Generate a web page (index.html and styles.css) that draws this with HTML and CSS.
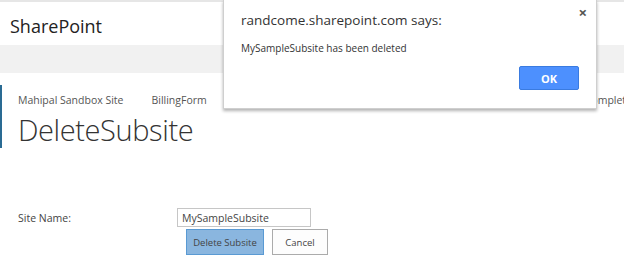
FILE: index.html
```html
<!DOCTYPE html>
<html>
<head>
    <title>DeleteSubsite</title>
    <link rel="stylesheet" href="styles.css">
</head>
<body>
    <div class="top-line"></div>
    <div class="suite-bar">SharePoint</div>
    <div class="ribbon"></div>

    <div class="page">
        <div class="accent"></div>
        <div class="content">
            <div class="breadcrumb">
                <span>Mahipal Sandbox Site</span>
                <span>BillingForm</span>
                <span class="crumb-right">Complete</span>
            </div>
            <h1>DeleteSubsite</h1>

            <div class="form-row">
                <label for="site-name">Site Name:</label>
                <div class="field">
                    <input type="text" id="site-name" value="MySampleSubsite">
                    <div class="buttons">
                        <button class="primary">Delete Subsite</button>
                        <button>Cancel</button>
                    </div>
                </div>
            </div>
        </div>
    </div>

    <!-- Browser alert -->
    <div class="alert">
        <div class="alert-close">&times;</div>
        <div class="alert-title">randcome.sharepoint.com says:</div>
        <div class="alert-msg">MySampleSubsite has been deleted</div>
        <div class="alert-actions">
            <button class="ok">OK</button>
        </div>
    </div>
</body>
</html>
```

FILE: styles.css
```css
body {
    margin: 0;
    font-family: "Segoe UI", "Open Sans", "Noto Sans", sans-serif;
    background-color: #fff;
    color: #444;
    width: 624px;
    height: 275px;
    overflow: hidden;
    position: relative;
}
.top-line {
    height: 2px;
    background-color: #e6e6e6;
}
.suite-bar {
    height: 43px;
    box-sizing: border-box;
    padding: 13px 0 0 10px;
    font-size: 18px;
    color: #222;
    line-height: 22px;
}
.ribbon {
    height: 28px;
    background-color: #f1f1f1;
}
/* Main page */
.page {
    display: flex;
    padding-top: 12px;
}
.accent {
    width: 2px;
    height: 63px;
    background-color: #2a6b93;
    flex-shrink: 0;
}
.content {
    padding-left: 16px;
    flex: 1;
    min-width: 0;
}
.breadcrumb {
    font-size: 10.5px;
    color: #555;
    line-height: 15px;
    display: flex;
    gap: 28px;
    margin-top: 8px;
    white-space: nowrap;
    overflow: hidden;
}
.crumb-right {
    margin-left: auto;
    margin-right: -8px;
}
h1 {
    margin: 4px 0 0 0;
    font-size: 29px;
    font-weight: 300;
    color: #333;
    line-height: 35px;
    letter-spacing: -0.4px;
}
.form-row {
    display: flex;
    margin-top: 61px;
}
.form-row label {
    width: 159px;
    font-size: 10.5px;
    color: #444;
    padding-top: 3px;
}
.field {
    display: flex;
    flex-direction: column;
}
.field input {
    width: 134px;
    height: 19px;
    box-sizing: border-box;
    border: 1px solid #c6c6c6;
    padding: 0 4px;
    font-family: inherit;
    font-size: 10.5px;
    color: #444;
}
.buttons {
    display: flex;
    gap: 8px;
    margin: 2px 0 0 9px;
}
.buttons button {
    height: 26px;
    width: 56px;
    box-sizing: border-box;
    border: 1px solid #ababab;
    background-color: #fdfdfd;
    font-family: inherit;
    font-size: 9.5px;
    color: #444;
    padding: 0;
    white-space: nowrap;
}
.buttons button.primary {
    width: 78px;
    background-color: #8ab6df;
    border-color: #5a9ad3;
}
/* Alert dialog */
.alert {
    position: absolute;
    left: 223px;
    top: 0;
    width: 374px;
    height: 109px;
    box-sizing: border-box;
    background-color: #fff;
    border: 1px solid #cfcfcf;
    border-top: none;
    box-shadow: 0 2px 3px rgba(0, 0, 0, 0.3);
    padding: 9px 17px 0 17px;
}
.alert-close {
    position: absolute;
    right: 9px;
    top: 2px;
    font-size: 15px;
    font-weight: bold;
    color: #555;
}
.alert-title {
    font-size: 13.5px;
    color: #333;
    line-height: 22px;
}
.alert-msg {
    margin-top: 10px;
    font-size: 10px;
    color: #333;
    line-height: 14px;
}
.alert-actions {
    display: flex;
    justify-content: flex-end;
    margin-top: 11px;
}
.alert-actions .ok {
    width: 60px;
    height: 24px;
    border: 1px solid #3a7be0;
    border-radius: 2px;
    background-color: #4d90fe;
    color: #fff;
    font-family: inherit;
    font-weight: bold;
    font-size: 11px;
}
```
